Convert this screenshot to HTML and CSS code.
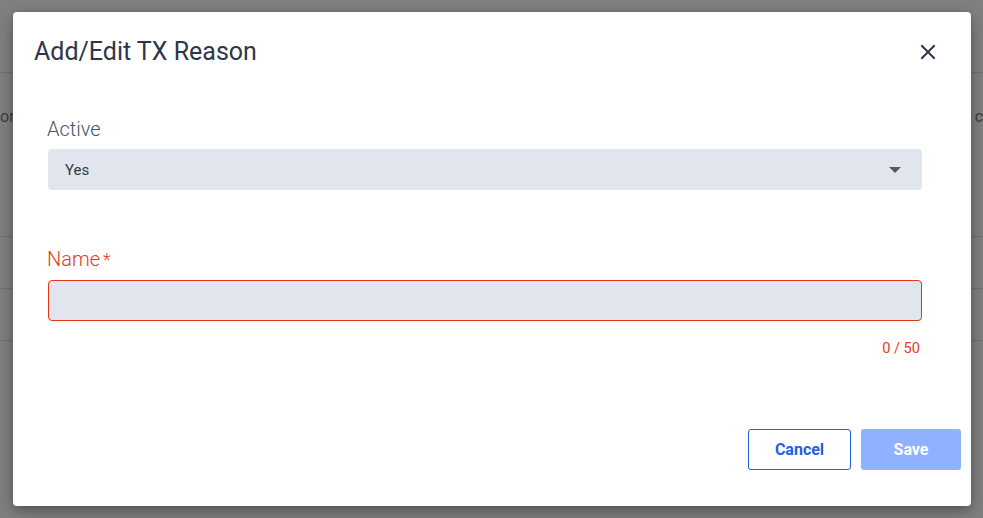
FILE: index.html
```html
<!DOCTYPE html>
<html>
<head>
<meta charset="utf-8">
<link rel="stylesheet" href="styles.css">
</head>
<body>
<div class="page">
  <div class="row row-top"></div>
  <div class="row row-head"><span class="frag-left">or</span><span class="frag-right">c</span></div>
  <div class="row row-a"></div>
  <div class="row row-b"></div>
</div>
<div class="backdrop">
  <div class="dialog">
    <div class="dialog-header">
      <h2 class="dialog-title">Add/Edit TX Reason</h2>
      <button class="close-btn" aria-label="Close">
        <svg width="16" height="16" viewBox="0 0 16 16"><path d="M2 2 L14 14 M14 2 L2 14" stroke="#2d3748" stroke-width="2" stroke-linecap="square" fill="none"/></svg>
      </button>
    </div>
    <div class="dialog-body">
      <label class="field-label">Active</label>
      <div class="select">
        <span class="select-value">Yes</span>
        <svg class="select-arrow" width="12" height="6" viewBox="0 0 12 6"><path d="M0 0 H12 L6 6 Z" fill="#5a5a5a"/></svg>
      </div>
      <label class="field-label label-error">Name<span class="req">*</span></label>
      <div class="input input-error"></div>
      <div class="counter">0 / 50</div>
    </div>
    <div class="dialog-actions">
      <button class="btn btn-outline">Cancel</button>
      <button class="btn btn-disabled">Save</button>
    </div>
  </div>
</div>
</body>
</html>
```
FILE: styles.css
```css
html, body {
  margin: 0;
  padding: 0;
}
body {
  width: 983px;
  height: 518px;
  overflow: hidden;
  background: #808080;
  font-family: Roboto, "Liberation Sans", sans-serif;
  position: relative;
}
.page {
  display: flex;
  flex-direction: column;
}
.row {
  border-bottom: 1px solid #727272;
}
.row-top { height: 72px; }
.row-head {
  height: 164px;
  display: flex;
  justify-content: space-between;
  align-items: flex-start;
  padding: 34px 0 0 0;
  box-sizing: border-box;
  font-size: 16px;
  color: #3d3d3d;
}
.frag-left { margin-left: 0; }
.frag-right { margin-right: 0; }
.row-a { height: 51px; }
.row-b { height: 51px; }

.backdrop {
  position: absolute;
  inset: 0;
}
.dialog {
  position: absolute;
  left: 13px;
  top: 12px;
  width: 958px;
  height: 494px;
  background: #fff;
  border-radius: 4px;
  box-shadow: 0 6px 18px rgba(0,0,0,0.28), 0 2px 6px rgba(0,0,0,0.15);
  display: flex;
  flex-direction: column;
  box-sizing: border-box;
}
.dialog-header {
  display: flex;
  align-items: center;
  justify-content: space-between;
  padding: 20px 31px 20px 21px;
  height: 80px;
  box-sizing: border-box;
}
.dialog-title {
  margin: 0;
  font-size: 25px;
  font-weight: 400;
  color: #2d3748;
  line-height: 40px;
}
.close-btn {
  width: 24px;
  height: 24px;
  padding: 0;
  border: 0;
  background: transparent;
  display: flex;
  align-items: center;
  justify-content: center;
}
.dialog-body {
  display: flex;
  flex-direction: column;
  padding: 0 49px 0 35px;
}
.field-label {
  font-size: 20px;
  font-weight: 300;
  color: #4a5263;
  line-height: 24px;
  margin-left: -1px;
}
.field-label:first-child { margin-top: 25px; }
.label-error {
  color: #e2401c;
  margin-top: 57px;
}
.req { margin-left: 3px; font-size: 18px; }
.select {
  margin-top: 8px;
  height: 41px;
  background: #e1e5ed;
  border-radius: 4px;
  display: flex;
  align-items: center;
  justify-content: space-between;
  padding: 0 21px 0 17px;
  box-sizing: border-box;
}
.select-value {
  font-size: 15px;
  color: #333a44;
}
.select-arrow { margin-top: 1px; }
.input {
  margin-top: 8px;
  height: 41px;
  background: #e1e5ed;
  border-radius: 4px;
  box-sizing: border-box;
}
.input-error { border: 1px solid #de3912; }
.counter {
  margin-top: 17px;
  text-align: right;
  font-size: 14.6px;
  line-height: 20px;
  color: #e2401c;
  padding-right: 2px;
}
.dialog-actions {
  margin-top: auto;
  display: flex;
  justify-content: flex-end;
  gap: 10px;
  padding: 0 10px 36px 0;
}
.btn {
  height: 41px;
  border-radius: 3px;
  font-family: Roboto, "Liberation Sans", sans-serif;
  font-size: 16px;
  font-weight: 700;
  box-sizing: border-box;
  cursor: pointer;
}
.btn-outline {
  width: 103px;
  background: #fff;
  border: 1px solid #1c5fe8;
  color: #1c5fe8;
}
.btn-disabled {
  width: 100px;
  background: #8fb1ff;
  border: 0;
  color: #fff;
}
```
